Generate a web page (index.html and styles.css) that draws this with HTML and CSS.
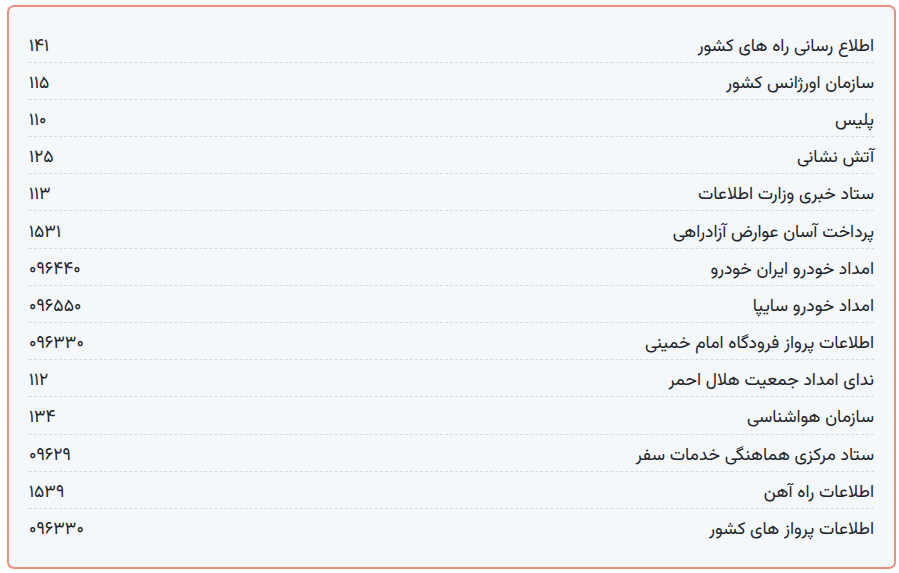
FILE: index.html
```html
<!DOCTYPE html>
<html lang="fa" dir="rtl">
<head>
<meta charset="utf-8">
<link rel="stylesheet" href="styles.css">
</head>
<body>
<div class="card">
  <div class="row"><span class="name">اطلاع رسانی راه های کشور</span><span class="num">۱۴۱</span></div>
  <div class="row"><span class="name">سازمان اورژانس کشور</span><span class="num">۱۱۵</span></div>
  <div class="row"><span class="name">پلیس</span><span class="num">۱۱۰</span></div>
  <div class="row"><span class="name">آتش نشانی</span><span class="num">۱۲۵</span></div>
  <div class="row"><span class="name">ستاد خبری وزارت اطلاعات</span><span class="num">۱۱۳</span></div>
  <div class="row"><span class="name">پرداخت آسان عوارض آزادراهی</span><span class="num">۱۵۳۱</span></div>
  <div class="row"><span class="name">امداد خودرو ایران خودرو</span><span class="num">۰۹۶۴۴۰</span></div>
  <div class="row"><span class="name">امداد خودرو سایپا</span><span class="num">۰۹۶۵۵۰</span></div>
  <div class="row"><span class="name">اطلاعات پرواز فرودگاه امام خمینی</span><span class="num">۰۹۶۳۳۰</span></div>
  <div class="row"><span class="name">ندای امداد جمعیت هلال احمر</span><span class="num">۱۱۲</span></div>
  <div class="row"><span class="name">سازمان هواشناسی</span><span class="num">۱۳۴</span></div>
  <div class="row"><span class="name">ستاد مرکزی هماهنگی خدمات سفر</span><span class="num">۰۹۶۲۹</span></div>
  <div class="row"><span class="name">اطلاعات راه آهن</span><span class="num">۱۵۳۹</span></div>
  <div class="row"><span class="name">اطلاعات پرواز های کشور</span><span class="num">۰۹۶۳۳۰</span></div>
</div>
</body>
</html>
```
FILE: styles.css
```css
html, body {
  margin: 0;
  padding: 0;
  background: #ffffff;
}
body {
  padding: 5px 3px 4px 7px;
  font-family: "Vazirmatn", "Noto Sans Arabic", "DejaVu Sans", sans-serif;
  color: #212529;
}
.card {
  box-sizing: border-box;
  height: 564px;
  border: 2px solid #e8907c;
  border-radius: 7px;
  background: #f5f8fb;
  padding: 18.5px 20px 0 20px;
}
.row {
  display: flex;
  justify-content: space-between;
  align-items: center;
  height: 31.2px;
  padding-top: 5px;
  border-bottom: 1px dashed #d6dade;
  font-size: 17.5px;
}
.row:last-child {
  border-bottom: none;
}
.num {
  direction: rtl;
}
```
